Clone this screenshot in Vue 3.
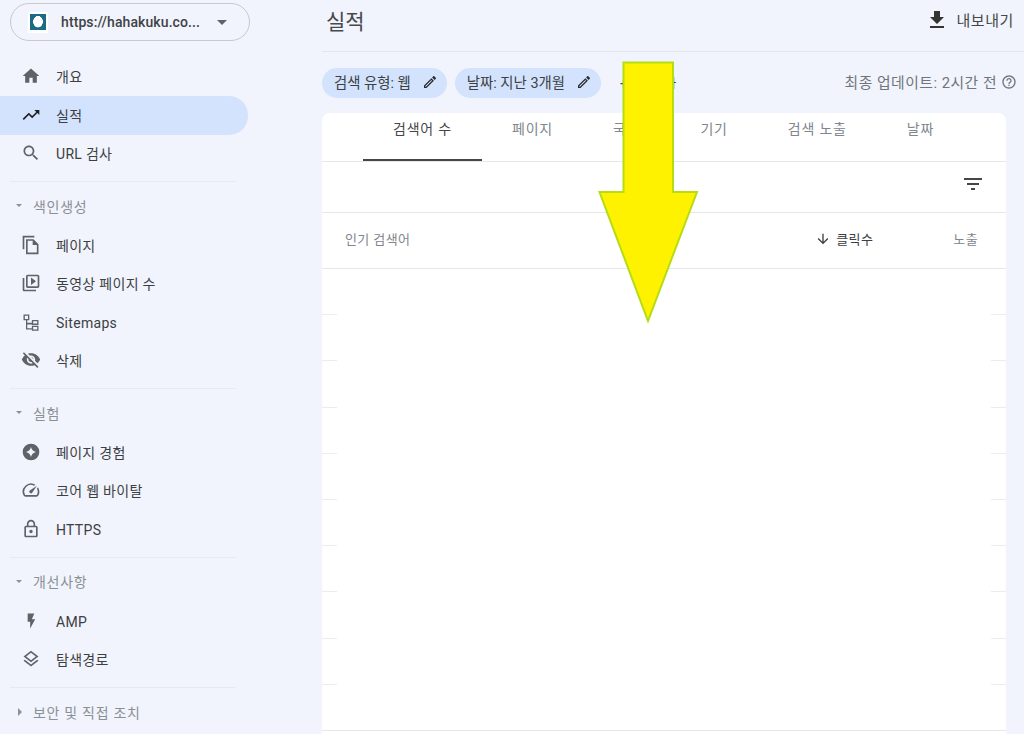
<script setup>
const icons = {
  home: "M10 20v-6h4v6h5v-8h3L12 3 2 12h3v8z",
  trend: "M16 6l2.29 2.29-4.88 4.88-4-4L2 16.59 3.41 18l6-6 4 4 6.3-6.29L22 12V6z",
  search: "M15.5 14h-.79l-.28-.27C15.41 12.59 16 11.11 16 9.5 16 5.91 13.09 3 9.5 3S3 5.91 3 9.5 5.91 16 9.5 16c1.61 0 3.09-.59 4.23-1.57l.27.28v.79l5 4.99L20.49 19l-4.99-5zm-6 0C7.01 14 5 11.99 5 9.5S7.01 5 9.5 5 14 7.01 14 9.5 11.99 14 9.5 14z",
  pages: "M16 1H2v16h2V3h12V1zm-1 4H6v18h15V11l-6-6zm4 16H8V7h6v5h5v9z",
  video: "M4 6H2v14c0 1.1.9 2 2 2h14v-2H4V6zm16-4H8c-1.1 0-2 .9-2 2v12c0 1.1.9 2 2 2h12c1.1 0 2-.9 2-2V4c0-1.1-.9-2-2-2zm0 14H8V4h12v12zM12 5.5v9l6-4.5z",
  sitemap: "M3 3h7v7H7.5v3H13V9.5h8v6h-8V15H7.5v4.5H13v-3h8v6h-8V21H6V10H3V3zM4.6 4.6v3.8h3.8V4.6zM14.6 11.1v2.800h4.800v-2.800zM14.6 18.100v2.800h4.800v-2.800z",
  hidden: "M12 6.5c2.76 0 5 2.24 5 5 0 .51-.1 1-.24 1.46l3.06 3.06c1.39-1.23 2.49-2.77 3.18-4.53C21.27 7.11 17 4 12 4c-1.27 0-2.49.2-3.64.57l2.17 2.17c.47-.14.96-.24 1.47-.24zM2.71 3.16c-.39.39-.39 1.02 0 1.41l1.97 1.97C3.06 7.83 1.77 9.53 1 11.5 2.73 15.89 7 19 12 19c1.52 0 2.97-.3 4.31-.82l2.72 2.72c.39.39 1.02.39 1.41 0 .39-.39.39-1.02 0-1.41L4.13 3.16c-.39-.39-1.03-.39-1.42 0zM12 16.5c-2.76 0-5-2.24-5-5 0-.77.18-1.5.49-2.14l1.57 1.57c-.03.18-.06.37-.06.57 0 1.66 1.34 3 3 3 .2 0 .38-.03.57-.07L14.14 16c-.65.32-1.37.5-2.14.5zm2.97-5.33c-.15-1.4-1.25-2.49-2.64-2.64l2.64 2.64z",
  star: "M12 2a10 10 0 1 0 0 20 10 10 0 0 0 0-20zm0 4c.7 3.3 2.7 5.3 6 6-3.3.7-5.3 2.7-6 6-.7-3.3-2.7-5.3-6-6 3.3-.7 5.3-2.7 6-6z",
  speed: "M20.38 8.57l-1.23 1.85a8 8 0 0 1-.22 7.58H5.07A8 8 0 0 1 15.58 6.85l1.85-1.23A10 10 0 0 0 3.35 19a2 2 0 0 0 1.72 1h13.85a2 2 0 0 0 1.74-1 10 10 0 0 0-.27-10.44zm-9.79 6.84a2 2 0 0 0 2.83 0l5.66-8.49-8.49 5.66a2 2 0 0 0 0 2.83z",
  lock: "M18 8h-1V6c0-2.76-2.24-5-5-5S7 3.24 7 6v2H6c-1.1 0-2 .9-2 2v10c0 1.1.9 2 2 2h12c1.1 0 2-.9 2-2V10c0-1.1-.9-2-2-2zM9 6c0-1.66 1.34-3 3-3s3 1.34 3 3v2H9V6zm9 14H6V10h12v10zm-6-3c1.1 0 2-.9 2-2s-.9-2-2-2-2 .9-2 2 .9 2 2 2z",
  bolt: "M8 3v10h3v8l6-11h-4l3-7z",
  layers: "M11.99 18.54l-7.37-5.73L3 14.07l9 7 9-7-1.63-1.27zM12 16l7.36-5.73L21 9l-9-7-9 7 1.63 1.27L12 16zm0-11.47L17.74 9 12 13.47 6.26 9 12 4.53z",
  download: "M19 9h-4V3H9v6H5l7 7 7-7zM5 18v2h14v-2H5z",
  edit: "M14.06 9.02l.92.92L5.92 19H5v-.92l9.06-9.06M17.66 3c-.25 0-.51.1-.7.29l-1.83 1.83 3.75 3.75 1.83-1.83c.39-.39.39-1.02 0-1.41l-2.34-2.34c-.2-.2-.45-.29-.71-.29zm-3.6 3.19L3 17.25V21h3.75L17.81 9.94l-3.75-3.75z",
  filter: "M10 18h4v-2h-4v2zM3 6v2h18V6H3zm3 7h12v-2H6v2z",
  down: "M20 12l-1.41-1.41L13 16.17V4h-2v12.17l-5.58-5.59L4 12l8 8 8-8z",
  help: "M11 18h2v-2h-2v2zm1-16C6.48 2 2 6.48 2 12s4.48 10 10 10 10-4.48 10-10S17.52 2 12 2zm0 18c-4.41 0-8-3.59-8-8s3.59-8 8-8 8 3.59 8 8-3.59 8-8 8zm0-14c-2.21 0-4 1.79-4 4h2c0-1.1.9-2 2-2s2 .9 2 2c0 2-3 1.75-3 5h2c0-2.25 3-2.5 3-5 0-2.21-1.79-4-4-4z",
};

const topItems = [
  { label: "개요", icon: "home" },
  { label: "실적", icon: "trend", active: true },
  { label: "URL 검사", icon: "search" },
];

const groups = [
  {
    title: "색인생성",
    items: [
      { label: "페이지", icon: "pages" },
      { label: "동영상 페이지 수", icon: "video" },
      { label: "Sitemaps", icon: "sitemap", latin: true },
      { label: "삭제", icon: "hidden" },
    ],
  },
  {
    title: "실험",
    items: [
      { label: "페이지 경험", icon: "star" },
      { label: "코어 웹 바이탈", icon: "speed" },
      { label: "HTTPS", icon: "lock", latin: true },
    ],
  },
  {
    title: "개선사항",
    items: [
      { label: "AMP", icon: "bolt", latin: true },
      { label: "탐색경로", icon: "layers" },
    ],
  },
  { title: "보안 및 직접 조치", items: [], closed: true },
];

const tabs = ["검색어 수", "페이지", "국가", "기기", "검색 노출", "날짜"];
const chips = ["검색 유형: 웹", "날짜: 지난 3개월"];
const rows = 10;
</script>

<template>
  <div class="page">
    <aside class="side">
      <div class="property">
        <span class="favicon"><i></i></span>
        <span class="property-name">https://hahakuku.co...</span>
        <span class="caret"></span>
      </div>

      <nav class="nav">
        <a v-for="item in topItems" :key="item.label" class="item" :class="{ active: item.active }">
          <svg viewBox="0 0 24 24" class="item-icon"><path :d="icons[item.icon]" /></svg>
          <span>{{ item.label }}</span>
        </a>
      </nav>

      <section v-for="group in groups" :key="group.title" class="group">
        <div class="group-title">
          <span class="mini-caret" :class="{ closed: group.closed }"></span>
          {{ group.title }}
        </div>
        <a v-for="item in group.items" :key="item.label" class="item">
          <svg viewBox="0 0 24 24" class="item-icon"><path :d="icons[item.icon]" /></svg>
          <span :class="{ latin: item.latin }">{{ item.label }}</span>
        </a>
      </section>
    </aside>

    <main class="main">
      <header class="head">
        <h1>실적</h1>
        <div class="export">
          <svg viewBox="0 0 24 24"><path :d="icons.download" /></svg>
          <span>내보내기</span>
        </div>
      </header>

      <div class="filters">
        <span v-for="chip in chips" :key="chip" class="chip">
          {{ chip }}
          <svg viewBox="0 0 24 24"><path :d="icons.edit" /></svg>
        </span>
        <span class="add">+ 새로 추가</span>
        <span class="updated">
          최종 업데이트: 2시간 전
          <svg viewBox="0 0 24 24"><path :d="icons.help" /></svg>
        </span>
      </div>

      <div class="card">
        <div class="tabs">
          <div v-for="(tab, i) in tabs" :key="tab" class="tab" :class="{ on: i === 0 }">{{ tab }}</div>
        </div>
        <div class="toolbar">
          <svg viewBox="0 0 24 24"><path :d="icons.filter" /></svg>
        </div>
        <div class="table-head">
          <span class="query">인기 검색어</span>
          <span class="clicks">
            <svg viewBox="0 0 24 24"><path :d="icons.down" /></svg>
            클릭수
          </span>
          <span class="views">노출</span>
        </div>
        <div v-for="n in rows" :key="n" class="row" :class="{ last: n === rows }">
          <i></i><i></i>
        </div>
      </div>
    </main>

    <svg class="arrow" viewBox="0 0 1024 734">
      <path d="M623.5 62.5H673V192H697L648 321L599.5 192H623.5Z" />
    </svg>
  </div>
</template>

<style scoped>
.page {
  position: relative;
  display: flex;
  width: 1024px;
  height: 734px;
  overflow: hidden;
  background: #f1f4fc;
  color: #444746;
  font-family: Roboto, "Noto Sans CJK KR", sans-serif;
  font-size: 14px;
}
svg {
  fill: currentColor;
  flex: none;
}

.side {
  width: 250px;
  flex: none;
}
.property {
  display: flex;
  align-items: center;
  height: 38px;
  margin: 3px 0 17px 10px;
  padding-left: 17px;
  border: 1px solid #c7c9cc;
  border-radius: 20px;
  box-sizing: border-box;
}
.favicon {
  display: flex;
  align-items: center;
  justify-content: center;
  width: 20px;
  height: 21px;
  background: #fff;
}
.favicon i {
  display: flex;
  width: 16px;
  height: 16px;
  background: radial-gradient(ellipse 5px 6px at 50% 48%, #fff 92%, #1d6a87 100%);
}
.property-name {
  margin-left: 13px;
  width: 147px;
  font-size: 14px;
  letter-spacing: 0.1px;
  white-space: nowrap;
  color: #3f4346;
  font-weight: 500;
}
.caret {
  margin-left: 9px;
  border: 5px solid transparent;
  border-top-color: #5f6368;
  border-bottom: 0;
}
.item {
  display: flex;
  align-items: center;
  gap: 15px;
  height: 38.4px;
  padding: 0 0 2px 21px;
  width: 248px;
  box-sizing: border-box;
  border-radius: 0 19px 19px 0;
  font-size: 14px;
  letter-spacing: 0.3px;
  color: #3c4043;
}
.item.active {
  background: #d3e3fd;
}
.item-icon {
  width: 20px;
  height: 20px;
  color: #5f6368;
}
.item.active .item-icon {
  color: #1f1f1f;
}
.latin {
  margin-top: 3px;
}
.group {
  margin: 8.1px 14px 0 0;
  padding-top: 5.6px;
  position: relative;
}
.group::before {
  content: "";
  position: absolute;
  top: 0;
  left: 10px;
  right: 0;
  border-top: 1px solid #e6e9ef;
}
.group .item {
  width: auto;
}
.group-title {
  display: flex;
  align-items: center;
  height: 39.8px;
  padding: 0 0 2px 16px;
  box-sizing: border-box;
  font-size: 14px;
  letter-spacing: 0.7px;
  color: #8b9095;
}
.mini-caret {
  width: 0;
  margin-right: 11px;
  border: 3.5px solid transparent;
  border-top-color: #8b9095;
  border-bottom: 0;
}
.mini-caret.closed {
  margin-left: 2px;
  margin-right: 11px;
  border: 4px solid transparent;
  border-left-color: #8b9095;
  border-right: 0;
}

.main {
  flex: 1;
  min-width: 0;
  margin-left: 72px;
}
.head {
  display: flex;
  align-items: center;
  justify-content: space-between;
  height: 52px;
  padding: 0 10px 12px 4px;
  box-sizing: border-box;
  border-bottom: 1px solid #e3e6ec;
}
h1 {
  margin: 0;
  font-size: 21px;
  font-weight: 400;
  color: #474a4d;
}
.export {
  display: flex;
  align-items: center;
  gap: 7px;
  font-size: 15px;
  letter-spacing: 0.6px;
  color: #444746;
}
.export svg {
  width: 24px;
  height: 24px;
  color: #333;
}
.filters {
  display: flex;
  align-items: center;
  height: 61px;
  font-size: 14.4px;
}
.chip {
  display: flex;
  align-items: center;
  height: 30px;
  padding: 0 9px 2px 12px;
  box-sizing: border-box;
  margin-right: 8px;
  gap: 11px;
  border-radius: 15px;
  background: #d3e3fd;
  color: #3c4043;
  white-space: nowrap;
}
.chip svg {
  width: 16px;
  height: 16px;
  color: #2b2b2b;
}
.add {
  margin-left: 11px;
  font-size: 12.5px;
  letter-spacing: -0.5px;
  white-space: nowrap;
}
.updated {
  display: flex;
  align-items: center;
  gap: 4px;
  margin-left: auto;
  padding: 0 7px 2px 0;
  font-size: 14.8px;
  color: #70757a;
  letter-spacing: 0.5px;
  white-space: nowrap;
}
.updated svg {
  width: 16px;
  height: 16px;
}

.card {
  width: 684px;
  height: 640px;
  background: #fff;
  border-radius: 8px 8px 0 0;
}
.tabs {
  display: flex;
  height: 49px;
  padding-left: 41px;
  border-bottom: 1px solid #e6e7e8;
  box-sizing: border-box;
}
.tab {
  display: flex;
  justify-content: center;
  align-items: center;
  height: 48px;
  padding: 0 30px 18px;
  box-sizing: border-box;
  font-size: 14px;
  letter-spacing: 0.8px;
  color: #80868b;
}
.tab.on {
  color: #444746;
  border-bottom: 2px solid #444746;
  padding-bottom: 16px;
}
.toolbar {
  display: flex;
  justify-content: flex-end;
  align-items: center;
  height: 51px;
  padding: 0 21px 6px 0;
  box-sizing: border-box;
  border-bottom: 1px solid #e6e7e8;
}
.toolbar svg {
  width: 24px;
  height: 24px;
  color: #444746;
}
.table-head {
  display: flex;
  align-items: center;
  height: 56px;
  padding: 0 28px 4px 23px;
  box-sizing: border-box;
  border-bottom: 1px solid #e6e7e8;
  font-size: 13px;
  letter-spacing: 0.4px;
  color: #80868b;
}
.query {
  flex: 1;
}
.clicks {
  display: flex;
  align-items: center;
  gap: 5px;
  margin-right: 80px;
  color: #3c4043;
}
.clicks svg {
  width: 16px;
  height: 16px;
}
.row {
  display: flex;
  justify-content: space-between;
  align-items: flex-end;
  height: 46.2px;
  box-sizing: border-box;
}
.row i {
  width: 15px;
  border-bottom: 1px solid #ececec;
}
.row.last {
  border-bottom: 1px solid #e6e7e8;
}
.row.last i {
  display: none;
}

.arrow {
  position: absolute;
  inset: 0;
  width: 1024px;
  height: 734px;
  pointer-events: none;
}
.arrow path {
  fill: #fff200;
  stroke: #b6dc14;
  stroke-width: 2;
}
</style>
